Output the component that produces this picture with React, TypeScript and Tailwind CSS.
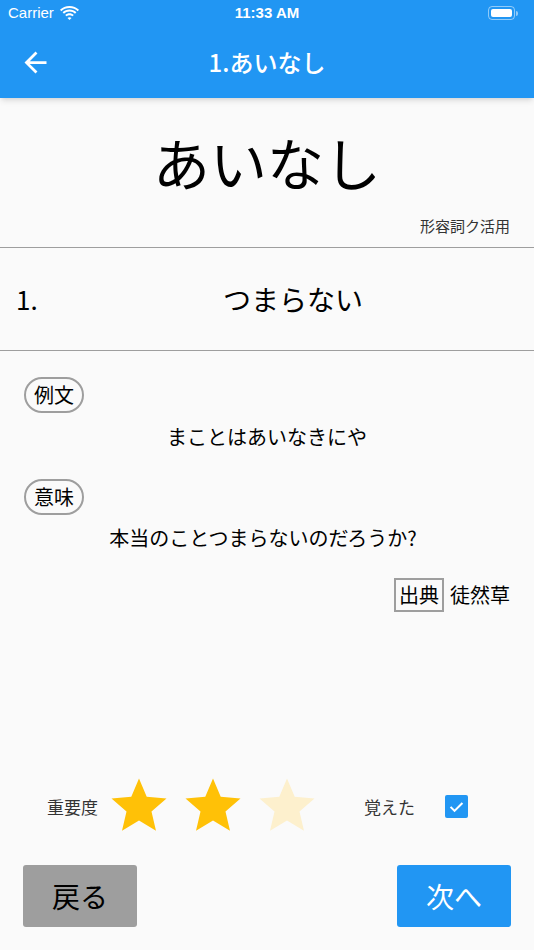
import React, { useState } from "react";

const font = { fontFamily: '"Noto Sans CJK JP", "Noto Sans", sans-serif' };

function Star({ filled }: { filled: boolean }) {
  return (
    <svg width="66" height="66" viewBox="0 0 24 24">
      <path
        d="M12 17.27L18.18 21l-1.64-7.03L22 9.24l-7.19-.61L12 2 9.19 8.63 2 9.24l5.46 4.73L5.82 21z"
        fill={filled ? "#FFC107" : "#FDF0CD"}
      />
    </svg>
  );
}

export default function App() {
  const [rank, setRank] = useState(2);
  const [learned, setLearned] = useState(true);

  return (
    <div className="w-[534px] h-[950px] bg-[#fafafa] flex flex-col text-black" style={font}>
      {/* App bar */}
      <div className="bg-[#2196F3] text-white shadow-md relative z-10">
        <div className="h-[26px] flex items-center px-2 relative" style={{ fontFamily: '"Liberation Sans", sans-serif' }}>
          <span className="text-[15px]">Carrier</span>
          <svg className="ml-[6px]" width="19" height="14" viewBox="0 0 19 14">
            <path d="M9.5 2C6.3 2 3.5 3.2 1.3 5.2L0 3.8C2.5 1.4 5.8 0 9.5 0s7 1.4 9.5 3.8l-1.3 1.4C15.5 3.2 12.7 2 9.5 2z" fill="white" />
            <path d="M9.5 5.6c-2.1 0-4 .8-5.5 2.1L2.6 6.3C4.5 4.6 6.9 3.6 9.5 3.6s5 1 6.9 2.7L15 7.7c-1.5-1.3-3.4-2.1-5.5-2.1z" fill="white" />
            <path d="M9.5 9.2c-1.1 0-2.1.4-2.9 1.1L5.2 8.9c1.2-1 2.7-1.7 4.3-1.7s3.1.7 4.3 1.7l-1.4 1.4c-.8-.7-1.8-1.1-2.9-1.1z" fill="white" />
            <path d="M9.5 14l-2-2c.5-.5 1.2-.8 2-.8s1.5.3 2 .8z" fill="white" />
          </svg>
          <span className="absolute left-0 right-0 text-center text-[15px] font-semibold">11:33 AM</span>
          <div className="ml-auto mr-[8px] flex items-center">
            <div className="w-[27px] h-[14px] rounded-[4px] border border-white/50 p-[2px]">
              <div className="w-full h-full bg-white rounded-[2px]" />
            </div>
            <div className="w-[2px] h-[5px] bg-white/50 rounded-r-sm ml-[1px]" />
          </div>
        </div>
        <div className="h-[72px] flex items-center relative">
          <svg className="ml-[19px]" width="33" height="33" viewBox="0 0 24 24">
            <path d="M20 11H7.83l5.59-5.59L12 4l-8 8 8 8 1.41-1.41L7.83 13H20v-2z" fill="white" />
          </svg>
          <span className="absolute left-0 right-0 text-center text-[24px] font-medium leading-none pointer-events-none">
            1.あいなし
          </span>
        </div>
      </div>

      {/* Word */}
      <div className="pt-[35px] pb-[11px]">
        <div className="text-center text-[57px] leading-[57px]">あいなし</div>
        <div className="mt-[26px] pr-[24px] text-right text-[15px] leading-[20px] text-[#333]">形容詞ク活用</div>
      </div>
      <div className="h-px bg-[#9e9e9e]" />

      {/* Meaning row */}
      <div className="h-[102px] flex items-center">
        <span className="pl-[16px] w-[52px] text-[26px] leading-none">1.</span>
        <span className="flex-1 text-center text-[28px] leading-none">つまらない</span>
      </div>
      <div className="h-px bg-[#9e9e9e]" />

      {/* Detail */}
      <div className="pt-[26px] px-[24px]">
        <div className="flex">
          <span className="border-2 border-[#9e9e9e] rounded-full px-[8px] py-[2px] text-[20px] leading-[28px]">例文</span>
        </div>
        <div className="mt-[10px] text-center text-[20px] leading-[28px]">まことはあいなきにや</div>
        <div className="mt-[28px] flex">
          <span className="border-2 border-[#9e9e9e] rounded-full px-[8px] py-[2px] text-[20px] leading-[28px]">意味</span>
        </div>
        <div className="mt-[9px] text-center text-[20px] leading-[28px] pr-[8px]">本当のことつまらないのだろうか?</div>
        <div className="mt-[26px] flex justify-end items-center">
          <span className="border-2 border-[#9e9e9e] px-[3px] py-[2px] text-[20px] leading-[26px]">出典</span>
          <span className="ml-[6px] text-[20px] leading-[26px]">徒然草</span>
        </div>
      </div>

      <div className="flex-1" />

      {/* Rating row */}
      <div className="flex items-center pl-[47px]">
        <span className="text-[17px] leading-none text-[#333]">重要度</span>
        <div className="ml-[8px] flex gap-[8px]">
          {[1, 2, 3].map((n) => (
            <button key={n} onClick={() => setRank(n)}>
              <Star filled={n <= rank} />
            </button>
          ))}
        </div>
        <span className="ml-[44px] text-[17px] leading-none text-[#333]">覚えた</span>
        <button
          onClick={() => setLearned(!learned)}
          className={`ml-[30px] w-[23px] h-[23px] rounded-[2px] flex items-center justify-center ${
            learned ? "bg-[#2196F3]" : "border-2 border-[#666]"
          }`}
        >
          {learned && (
            <svg width="19" height="19" viewBox="0 0 24 24">
              <path d="M4.5 12.5l5 5 10-10" stroke="white" strokeWidth="2.6" fill="none" />
            </svg>
          )}
        </button>
      </div>

      {/* Buttons */}
      <div className="mt-[26px] mb-[23px] px-[23px] flex justify-between">
        <button className="w-[114px] h-[62px] bg-[#9e9e9e] rounded-[3px] text-[28px] text-black">戻る</button>
        <button className="w-[114px] h-[62px] bg-[#2196F3] rounded-[3px] text-[28px] text-white">次へ</button>
      </div>
    </div>
  );
}
